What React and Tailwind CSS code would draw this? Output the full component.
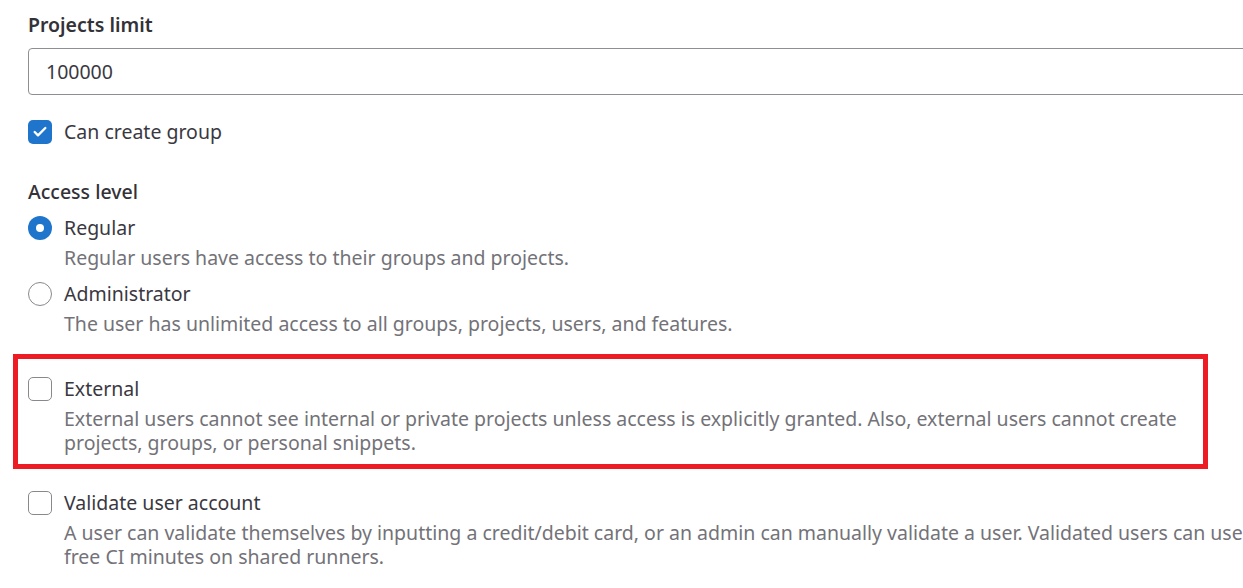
import { Check } from 'lucide-react';

const font = { fontFamily: '"Noto Sans", "Open Sans", sans-serif' };

function CheckBox({ checked }) {
  if (checked) {
    return (
      <span className="flex h-6 w-6 shrink-0 items-center justify-center rounded-[5px] bg-[#1f75cb]">
        <Check className="h-4 w-4 text-white" strokeWidth={3.5} />
      </span>
    );
  }
  return <span className="h-6 w-6 shrink-0 rounded-[5px] border border-[#89888d] bg-white" />;
}

function Radio({ checked }) {
  if (checked) {
    return (
      <span className="flex h-6 w-6 shrink-0 items-center justify-center rounded-full bg-[#1f75cb]">
        <span className="h-2 w-2 rounded-full bg-white" />
      </span>
    );
  }
  return <span className="h-6 w-6 shrink-0 rounded-full border border-[#89888d] bg-white" />;
}

function Option({ control, label, children }) {
  return (
    <div>
      <div className="flex h-6 items-center gap-3">
        {control}
        <span className="leading-6 text-[#3a383f]">{label}</span>
      </div>
      {children && (
        <div className="mt-[6px] pl-9 leading-6 whitespace-nowrap text-[#737278]">{children}</div>
      )}
    </div>
  );
}

export default function App() {
  return (
    <div className="h-[588px] w-[1243px] overflow-hidden bg-white text-[19.5px]" style={font}>
      <div className="w-[1300px] pl-[28px] pt-[13px]">
        {/* Projects limit */}
        <div className="font-semibold leading-6 text-[#333238]">Projects limit</div>
        <div className="mt-[11px] flex h-[47px] items-center rounded-[4px] border border-[#8f8e93] px-[17px] text-[#3a383f]">
          100000
        </div>

        <div className="mt-[25px]">
          <Option control={<CheckBox checked />} label="Can create group" />
        </div>

        {/* Access level */}
        <div className="mt-[36px] font-medium leading-6 text-[#333238]">Access level</div>
        <div className="mt-[12px]">
          <Option control={<Radio checked />} label="Regular">
            Regular users have access to their groups and projects.
          </Option>
        </div>
        <div className="mt-[12px]">
          <Option control={<Radio />} label="Administrator">
            The user has unlimited access to all groups, projects, users, and features.
          </Option>
        </div>

        {/* Highlighted option */}
        <div className="-ml-[15px] mt-[18px] w-[1195px] border-[5px] border-[#ed1c24] pb-[9px] pl-[10px] pt-[18px]">
          <Option control={<CheckBox />} label="External">
            External users cannot see internal or private projects unless access is explicitly granted. Also, external users cannot create
            <br />
            projects, groups, or personal snippets.
          </Option>
        </div>

        <div className="mt-[22px]">
          <Option control={<CheckBox />} label="Validate user account">
            A user can validate themselves by inputting a credit/debit card, or an admin can manually validate a user. Validated users can use
            <br />
            free CI minutes on shared runners.
          </Option>
        </div>
      </div>
    </div>
  );
}
